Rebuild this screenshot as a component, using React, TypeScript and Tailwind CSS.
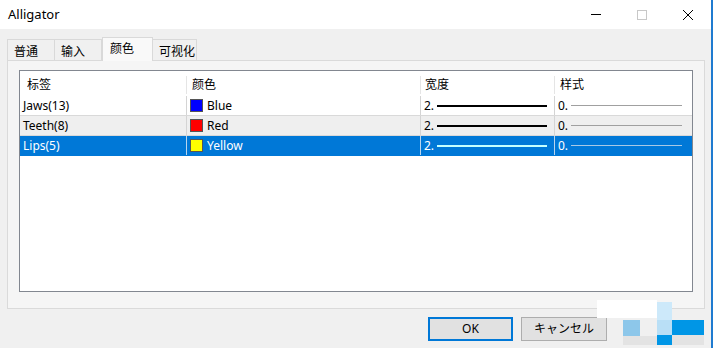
const FONT = '"Noto Sans", "Noto Sans CJK SC", sans-serif'

interface Line {
  label: string
  color: string
  colorName: string
}

const lines: Line[] = [
  { label: 'Jaws(13)', color: '#0000ff', colorName: 'Blue' },
  { label: 'Teeth(8)', color: '#ff0000', colorName: 'Red' },
  { label: 'Lips(5)', color: '#ffff00', colorName: 'Yellow' },
]

const tabs = ['普通', '输入', '颜色', '可视化']

function TitleBar() {
  return (
    <div className="flex h-[29px] items-center bg-white">
      <span className="pl-2 text-[13px] text-black">Alligator</span>
      <div className="ml-auto flex h-full items-center">
        <div className="flex w-[46px] justify-center">
          <div className="h-px w-[10px] bg-black" />
        </div>
        <div className="flex w-[46px] justify-center">
          <div className="h-[10px] w-[10px] border border-[#c8c8c8]" />
        </div>
        <div className="flex w-[46px] justify-center">
          <svg width="12" height="12" viewBox="0 0 12 12">
            <path d="M1 1 L11 11 M11 1 L1 11" stroke="#000" strokeWidth="1" />
          </svg>
        </div>
      </div>
    </div>
  )
}

function Tabs() {
  return (
    <div className="flex h-[31px] items-end pl-[7px]">
      {tabs.map((t, i) => {
        const active = i === 2
        const w = ['w-[48px]', 'w-[47px]', 'w-[51px]', 'w-[44px]'][i]
        return (
          <div
            key={t}
            className={
              active
                ? `${w} relative z-10 -mb-px flex h-[24px] items-start border border-b-0 border-[#d9d9d9] bg-[#f9f9f9] pl-[7px] pt-[2px] text-[12px]`
                : `${w} flex h-[21px] items-center border border-b-0 border-l-0 border-[#d9d9d9] bg-[#f0f0f0] pl-[6px] pt-[3px] text-[12px] first:border-l`
            }
          >
            {t}
          </div>
        )
      })}
    </div>
  )
}

function WidthCell({ selected }: { selected: boolean }) {
  return (
    <div className="flex items-center gap-[3px] pl-[3px]">
      <span>2.</span>
      <div className={`h-[2px] w-[110px] ${selected ? 'bg-[#c4ffff]' : 'bg-black'}`} />
    </div>
  )
}

function StyleCell({ selected }: { selected: boolean }) {
  return (
    <div className="flex items-center gap-[3px] pl-[3px]">
      <span>0.</span>
      <div className={`h-px w-[111px] ${selected ? 'bg-[#a7c9e6]' : 'bg-[#a0a0a0]'}`} />
    </div>
  )
}

function List() {
  const cols = 'grid grid-cols-[167px_234px_134px_1fr]'
  return (
    <div className="h-[222px] border border-[#828790] bg-white text-[12px]">
      <div className={`${cols} h-[25px] items-center pt-[3px]`}>
        <div className="border-r border-[#e5e5e5] pl-[7px]">标签</div>
        <div className="border-r border-[#e5e5e5] pl-[5px]">颜色</div>
        <div className="border-r border-[#e5e5e5] pl-[4px]">宽度</div>
        <div className="pl-[5px]">样式</div>
      </div>
      {lines.map((l, i) => {
        const selected = i === 2
        const bg = selected ? 'bg-[#0078d7] text-white' : i === 1 ? 'bg-[#efefef] text-black' : 'bg-white text-black'
        const sep = selected ? 'border-[#b8d5ee]' : 'border-[#d4d4d4]'
        return (
          <div key={l.label} className={`${cols} h-[20px] items-center border-b ${selected ? 'border-[#0078d7]' : 'border-[#d9d9d9]'} ${bg}`}>
            <div className={`flex h-full items-center border-r ${sep} pl-[3px]`}>{l.label}</div>
            <div className={`flex h-full items-center gap-[4px] border-r ${sep} pl-[3px]`}>
              <div className="h-[13px] w-[13px] border border-[#555]" style={{ backgroundColor: l.color }} />
              <span>{l.colorName}</span>
            </div>
            <div className={`flex h-full items-center border-r ${sep}`}>
              <WidthCell selected={selected} />
            </div>
            <div className="flex h-full items-center">
              <StyleCell selected={selected} />
            </div>
          </div>
        )
      })}
    </div>
  )
}

function Mosaic() {
  return (
    <div className="pointer-events-none absolute left-0 top-0 h-full w-full">
      <div className="absolute left-[597px] top-[300px] h-[18px] w-[60px] bg-white" />
      <div className="absolute left-[657px] top-[302px] h-[18px] w-[15px] bg-[#cde9fa]" />
      <div className="absolute left-[623px] top-[320px] h-[16px] w-[17px] bg-[#8dc7ea]" />
      <div className="absolute left-[657px] top-[320px] h-[15px] w-[15px] bg-[#b9dff6]" />
      <div className="absolute left-[672px] top-[320px] h-[15px] w-[32px] bg-[#0096e6]" />
      <div className="absolute left-[623px] top-[336px] h-[9px] w-[34px] bg-[#e3e3e3]" />
      <div className="absolute left-[657px] top-[335px] h-[10px] w-[15px] bg-[#0096e6]" />
      <div className="absolute left-[672px] top-[335px] h-[10px] w-[32px] bg-[#e3e3e3]" />
    </div>
  )
}

export default function App() {
  return (
    <div
      className="relative h-[348px] w-[713px] overflow-hidden border-r-2 border-[#1f7bd0] bg-[#f0f0f0] text-black"
      style={{ fontFamily: FONT }}
    >
      <TitleBar />
      <Tabs />
      <div className="ml-[7px] mr-[6px] h-[249px] border border-[#dadada] bg-[#f5f5f5] px-[11px] pt-[9px]">
        <List />
      </div>
      <div className="flex justify-end gap-[8px] pr-[104px] pt-[8px]">
        <button className="h-[24px] w-[85px] border-2 border-[#0078d7] bg-[#e1e1e1] text-[12px]">OK</button>
        <button className="h-[24px] w-[86px] border border-[#adadad] bg-[#e1e1e1] text-[12px]">キャンセル</button>
      </div>
      <Mosaic />
    </div>
  )
}
